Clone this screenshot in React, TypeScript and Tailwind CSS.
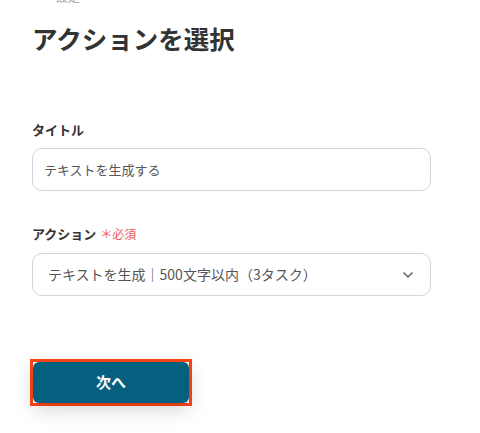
import { ChevronDown } from 'lucide-react';

export default function App() {
  return (
    <div
      className="min-h-screen bg-white px-[32px] text-[#333]"
      style={{ fontFamily: '"Noto Sans CJK JP", "Noto Sans", sans-serif' }}
    >
      {/* 上部の見切れたパンくず */}
      <div className="h-[4px] overflow-hidden pl-[24px]">
        <p className="-mt-[10px] text-[12px] leading-[14px] text-[#aaa]">設定</p>
      </div>

      <h1 className="mt-[16px] text-[25.5px] font-semibold leading-[36px]">アクションを選択</h1>

      <div className="mt-[64px]">
        <label className="block text-[13px] font-bold leading-[20px]">タイトル</label>
        <div className="mt-[8px] flex h-[43px] w-[399px] items-center rounded-[10px] border border-[#d4d4de] px-[11px] text-[13px] text-[#555]">
          テキストを生成する
        </div>
      </div>

      <div className="mt-[33px]">
        <label className="flex items-center gap-[4px] text-[13px] font-bold leading-[20px]">
          アクション
          <span className="text-[12px] font-normal text-[#f05a5a]">＊必須</span>
        </label>
        <div className="mt-[9px] flex h-[43px] w-[399px] items-center justify-between rounded-[10px] border border-[#d4d4de] pl-[15px] pr-[14px] text-[14px] text-[#555]">
          <span>テキストを生成｜500文字以内（3タスク）</span>
          <ChevronDown size={16} strokeWidth={2.5} className="text-[#666]" />
        </div>
      </div>

      <div className="-ml-[2px] mt-[63px] h-[47px] w-[162px] border-[3px] border-[#ff4514]">
        <button className="flex h-full w-full items-center justify-center rounded-[6px] bg-[#05607f] text-[15px] font-bold text-white shadow-[0_6px_20px_rgba(0,0,0,0.18)]">
          次へ
        </button>
      </div>
    </div>
  );
}
